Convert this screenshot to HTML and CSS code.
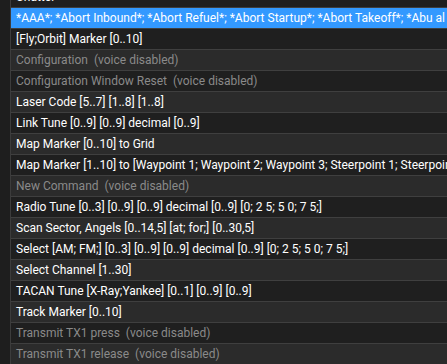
FILE: index.html
```html
<!DOCTYPE html>
<html>
<head>
    <link rel="stylesheet" href="styles.css">
</head>
<body>
    <div class="frame">
        <div class="gutter"></div>
        <div class="list">
            <div class="row dark">Chatter</div>
            <div class="row light selected">*AAA*; *Abort Inbound*; *Abort Refuel*; *Abort Startup*; *Abort Takeoff*; *Abu al Dhuhur*; *Al Dhafra*</div>
            <div class="row dark">[Fly;Orbit] Marker [0..10]</div>
            <div class="row light off">Configuration&nbsp; (voice disabled)</div>
            <div class="row dark off">Configuration Window Reset&nbsp; (voice disabled)</div>
            <div class="row light">Laser Code [5..7] [1..8] [1..8]</div>
            <div class="row dark">Link Tune [0..9] [0..9] decimal [0..9]</div>
            <div class="row light">Map Marker [0..10] to Grid</div>
            <div class="row dark">Map Marker [1..10] to [Waypoint 1; Waypoint 2; Waypoint 3; Steerpoint 1; Steerpoint 2]</div>
            <div class="row light off">New Command&nbsp; (voice disabled)</div>
            <div class="row dark">Radio Tune [0..3] [0..9] [0..9] decimal [0..9] [0; 2 5; 5 0; 7 5;]</div>
            <div class="row light">Scan Sector, Angels [0..14,5] [at; for;] [0..30,5]</div>
            <div class="row dark">Select [AM; FM;] [0..3] [0..9] [0..9] decimal [0..9] [0; 2 5; 5 0; 7 5;]</div>
            <div class="row light">Select Channel [1..30]</div>
            <div class="row dark">TACAN Tune [X-Ray;Yankee] [0..1] [0..9] [0..9]</div>
            <div class="row light">Track Marker [0..10]</div>
            <div class="row dark off">Transmit TX1 press&nbsp; (voice disabled)</div>
            <div class="row light off">Transmit TX1 release&nbsp; (voice disabled)</div>
        </div>
    </div>
</body>
</html>
```

FILE: styles.css
```css
body {
    margin: 0;
    background-color: #1e1e1e;
    font-family: Roboto, "Noto Sans", sans-serif;
    font-size: 12px;
    overflow: hidden;
}
.frame {
    display: flex;
    height: 364px;
    overflow: hidden;
}
.gutter {
    width: 10px;
    flex: none;
    background-color: #1e1e1e;
}
.list {
    flex: 1;
    min-width: 0;
    margin-top: -13px;
    border-left: 1px solid #3c3c3c;
}
.row {
    height: 20px;
    line-height: 20px;
    padding-left: 5px;
    border-bottom: 1px solid #3f3f3f;
    color: #ffffff;
    white-space: nowrap;
    overflow: hidden;
}
.dark {
    background-color: #1f1f1f;
}
.light {
    background-color: #2b2b2b;
}
.off {
    color: #8a8a8a;
}
.selected {
    background-color: #3399ff;
    color: #ffffff;
}
```
